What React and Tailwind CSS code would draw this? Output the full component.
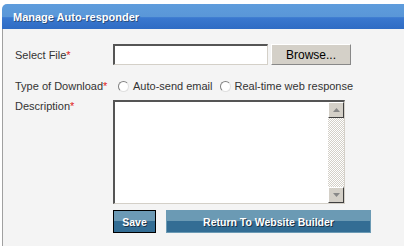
export default function App() {
  return (
    <div className="h-[246px] w-[404px] bg-white pt-[4px] pl-[2px] font-['Liberation_Sans',sans-serif] text-[11px] leading-[16px] text-[#333]">
      <div className="flex h-[25px] items-center rounded-tl-[5px] bg-[linear-gradient(#5e9cdc_0%,#5a97d8_50%,#3a78cf_55%,#2f6cc4_100%)] pl-[11px] text-[11px] font-bold text-white [text-shadow:1px_1px_0_#2a4f80]">
        Manage Auto-responder
      </div>
      <div className="h-[217px] border-l border-[#a0a0a0] bg-[#f4f4f4] pl-[12px] pt-[15px]">
        <div className="flex h-[21px] items-center">
          <div className="w-[98px] whitespace-nowrap">
            Select File<span className="text-[#e02020]">*</span>
          </div>
          <div className="h-[21px] w-[155px] border-t-2 border-l-2 border-t-[#555] border-l-[#555] border-b border-r border-b-[#d4d0c8] border-r-[#d4d0c8] bg-white" />
          <button className="ml-[3px] h-[21px] w-[80px] border border-[#fff] border-r-[#888] border-b-[#888] bg-[#d4d0c8] text-[12px] text-black">
            Browse...
          </button>
        </div>
        <div className="mt-[13px] flex h-[16px] items-center whitespace-nowrap">
          <div className="w-[103px]">
            Type of Download<span className="text-[#e02020]">*</span>
          </div>
          <Radio />
          <span className="ml-[4px] mr-[7px]">Auto-send email</span>
          <Radio />
          <span className="ml-[4px]">Real-time web response</span>
        </div>
        <div className="mt-[4px] flex items-start">
          <div className="w-[98px] whitespace-nowrap">
            Description<span className="text-[#e02020]">*</span>
          </div>
          <div className="mt-[2px] flex h-[104px] w-[232px] border-t-2 border-l-2 border-t-[#555] border-l-[#555] border-b border-r border-b-[#d4d0c8] border-r-[#d4d0c8] bg-white">
            <div className="flex-1" />
            <div className="flex w-[16px] flex-col bg-[repeating-conic-gradient(#d4d0c8_0_25%,#ffffff_0_50%)] bg-[length:2px_2px]">
              <ScrollBtn up />
              <div className="flex-1" />
              <ScrollBtn />
            </div>
          </div>
        </div>
        <div className="ml-[98px] mt-[6px] flex gap-[10px]">
          <button className="h-[23px] w-[43px] border border-black bg-[linear-gradient(#6c9ab5_0%,#6c9ab5_50%,#336d94_50%,#336d94_100%)] text-[10.5px] font-bold text-white [text-shadow:1px_1px_0_#234]">
            Save
          </button>
          <button className="h-[23px] w-[205px] border border-[#6b9ab4] bg-[linear-gradient(#6b9ab4_0%,#6b9ab4_50%,#336d94_50%,#336d94_100%)] text-[10.5px] font-bold text-white [text-shadow:1px_1px_0_#234]">
            Return To Website Builder
          </button>
        </div>
      </div>
    </div>
  );
}

function Radio() {
  return (
    <span className="inline-block h-[11px] w-[11px] shrink-0 rounded-full border border-[#808080] border-r-[#e0e0e0] border-b-[#e0e0e0] bg-white" />
  );
}

function ScrollBtn({ up }) {
  return (
    <div className="flex h-[16px] w-[16px] items-center justify-center border border-[#fff] border-r-[#404040] border-b-[#404040] bg-[#d4d0c8]">
      <svg width="7" height="4" viewBox="0 0 7 4">
        {up ? (
          <path d="M3.5 0L7 4H0Z" fill="#888" />
        ) : (
          <path d="M0 0H7L3.5 4Z" fill="#888" />
        )}
      </svg>
    </div>
  );
}
